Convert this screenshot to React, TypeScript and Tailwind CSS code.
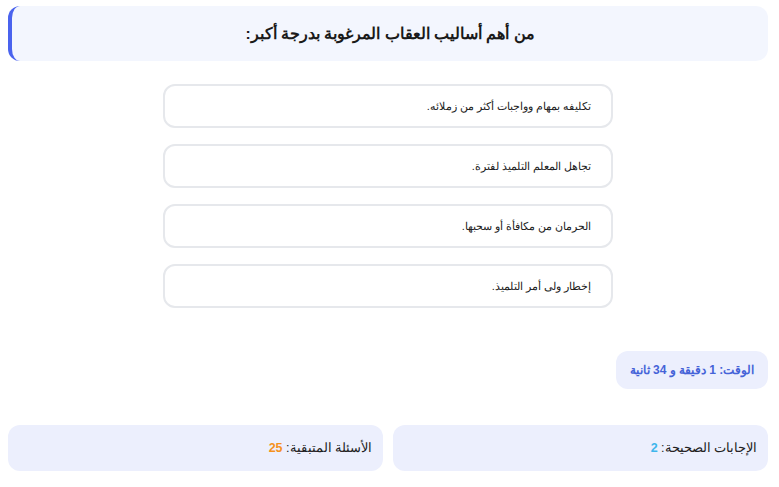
const options = [
  "تكليفه بمهام وواجبات أكثر من زملائه.",
  "تجاهل المعلم التلميذ لفترة.",
  "الحرمان من مكافأة أو سحبها.",
  "إخطار ولى أمر التلميذ.",
];

export default function App() {
  return (
    <div
      dir="rtl"
      className="min-h-[487px] bg-white text-[#111] ml-2 w-[760px] pt-[6px]"
      style={{ fontFamily: '"Liberation Sans", Arial, sans-serif' }}
    >
      {/* Question header */}
      <div className="h-[55px] flex items-center justify-center rounded-xl bg-[#f3f6fe] border-l-4 border-[#4a63ee]">
        <h2 className="text-[15.5px] font-bold text-[#1a1a1a]">
          من أهم أساليب العقاب المرغوبة بدرجة أكبر:
        </h2>
      </div>

      {/* Answer options */}
      <div className="mt-[23px] flex flex-col items-center gap-4">
        {options.map((opt, i) => (
          <div
            key={i}
            className="w-[450px] h-[44px] flex items-center px-5 rounded-xl border-2 border-[#e6e8ec] bg-white text-[11px] text-[#222]"
          >
            {opt}
          </div>
        ))}
      </div>

      {/* Timer */}
      <div className="mt-[43px] flex">
        <div className="w-[152px] h-[38px] flex items-center justify-center rounded-xl bg-[#eceffd] text-[12px] font-bold text-[#4563d8]">
          الوقت: 1 دقيقة و 34 ثانية
        </div>
      </div>

      {/* Stats */}
      <div className="mt-[36px] flex gap-[10px]">
        <div className="flex-1 h-[46px] flex items-center px-[11px] rounded-xl bg-[#eceffd] text-[12.5px] text-[#222]">
          الإجابات الصحيحة:&nbsp;
          <span className="font-bold text-[#3fb6ec]">2</span>
        </div>
        <div className="flex-1 h-[46px] flex items-center px-[11px] rounded-xl bg-[#eceffd] text-[12.5px] text-[#222]">
          الأسئلة المتبقية:&nbsp;
          <span className="font-bold text-[#f5921e]">25</span>
        </div>
      </div>
    </div>
  );
}
